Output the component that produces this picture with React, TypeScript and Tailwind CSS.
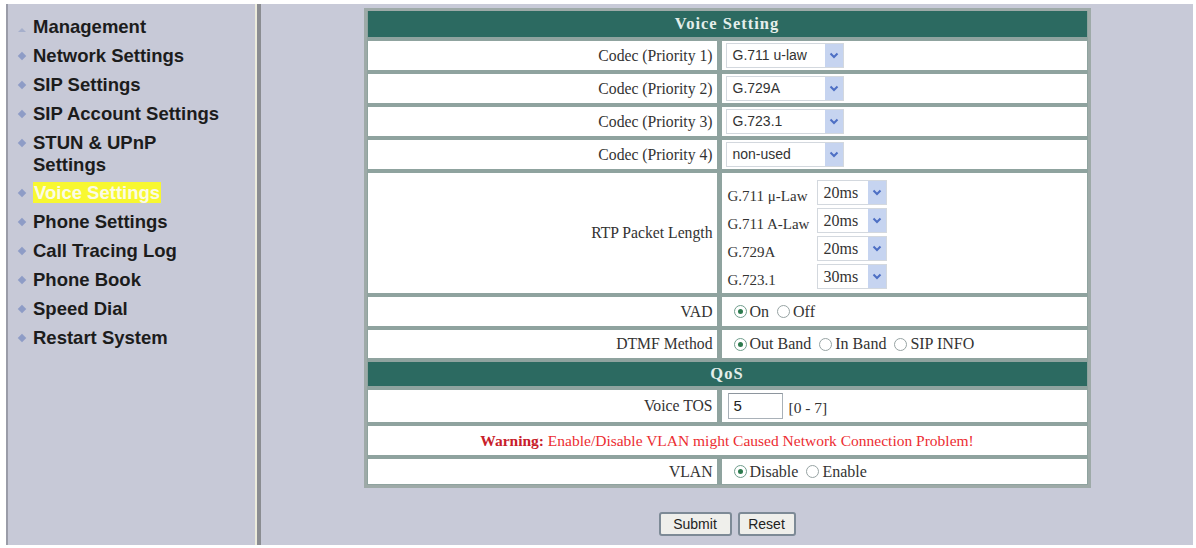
import React from "react";

const menu = [
  "Management",
  "Network Settings",
  "SIP Settings",
  "SIP Account Settings",
  "STUN & UPnP Settings",
  "Voice Settings",
  "Phone Settings",
  "Call Tracing Log",
  "Phone Book",
  "Speed Dial",
  "Restart System",
];

const serif = "font-['Liberation_Serif',serif]";
const sans = "font-['Liberation_Sans',Arial,sans-serif]";

const Chevron = () => (
  <svg width="10" height="7" viewBox="0 0 10 7">
    <path d="M1.5 1.5 L5 5 L8.5 1.5" stroke="#4d6fc4" strokeWidth="2" fill="none" />
  </svg>
);

const FakeSelect = ({ value, width, serifText }: { value: string; width: string; serifText?: boolean }) => (
  <div className={`${width} h-[25px] flex items-stretch bg-white border border-[#d3d8de]`}>
    <span
      className={`flex-1 flex items-center pl-[6px] text-[#333] ${
        serifText ? `${serif} text-[16px]` : `${sans} text-[14px]`
      }`}
    >
      {value}
    </span>
    <span className="w-[18px] bg-[#c6d4f0] flex items-center justify-center">
      <Chevron />
    </span>
  </div>
);

const Radio = ({ checked, label }: { checked?: boolean; label: string }) => (
  <span className="flex items-center mr-[8px]">
    <span
      className={`w-[13px] h-[13px] rounded-full border bg-white flex items-center justify-center mr-[3px] ${
        checked ? "border-[#6f9d8c]" : "border-[#97a3a3]"
      }`}
    >
      {checked && <span className="w-[5px] h-[5px] rounded-full bg-[#2d7a4d]" />}
    </span>
    <span className={`${serif} text-[16px] text-[#333]`}>{label}</span>
  </span>
);

const Row = ({ label, h, children }: { label: string; h: string; children: React.ReactNode }) => (
  <div className={`flex gap-[5px] ${h}`}>
    <div className={`w-[349px] bg-white flex items-center justify-end pr-[4px] ${serif} text-[15.7px] text-[#333]`}>
      {label}
    </div>
    <div className="flex-1 bg-white flex items-center pl-[4px]">{children}</div>
  </div>
);

const Header = ({ title, h }: { title: string; h: string }) => (
  <div
    className={`${h} bg-[#2c6a61] flex items-center justify-center ${serif} font-bold text-[16.5px] tracking-[1px] text-[#e4eeea]`}
  >
    {title}
  </div>
);

const rtp = [
  ["G.711 μ-Law", "20ms"],
  ["G.711 A-Law", "20ms"],
  ["G.729A", "20ms"],
  ["G.723.1", "30ms"],
];

export default function App() {
  return (
    <div className="w-[1196px] h-[548px] bg-white pt-[4px] pl-[6px] pr-[3px] pb-[3px] flex">
      {/* Sidebar */}
      <aside className="w-[249px] bg-[#c7c9d7] border-l-2 border-[#9a9ca8] pt-[12px] pl-[9px] flex flex-col gap-[6.9px]">
        {menu.map((item, i) => (
          <div key={item} className="flex items-start">
            <span className="w-[9px] h-[22px] flex items-center justify-center mr-[7px]">
              {i === 0 ? (
                <span className="w-0 h-0 border-l-[4px] border-r-[4px] border-b-[4px] border-l-transparent border-r-transparent border-b-[#a6afcb] mt-[6px]" />
              ) : (
                <span className="w-[6px] h-[6px] rotate-45 bg-[#8e9cc6]" />
              )}
            </span>
            <span className={`w-[194px] ${sans} font-bold text-[18.5px] leading-[22px] text-[#1c1c1c]`}>
              {i === 5 ? (
                <span className="bg-[#f8f830] text-[#fbfbe6] px-[1px]">{item}</span>
              ) : (
                item
              )}
            </span>
          </div>
        ))}
      </aside>

      {/* Separator */}
      <div className="w-[2px] bg-[#ecebdc]" />
      <div className="w-[4px] bg-[#8b8d92]" />

      {/* Content */}
      <main className="flex-1 bg-[#c8cad8] flex flex-col items-center pt-[4px]">
        <div className="w-[727px] border-[3px] border-[#9eaaa8] bg-[#8fa39f] px-[1px] pb-[1px] flex flex-col gap-[4px]">
          <Header title="Voice Setting" h="h-[26px]" />
          <Row label="Codec (Priority 1)" h="h-[29px]">
            <FakeSelect value="G.711 u-law" width="w-[118px]" />
          </Row>
          <Row label="Codec (Priority 2)" h="h-[29px]">
            <FakeSelect value="G.729A" width="w-[118px]" />
          </Row>
          <Row label="Codec (Priority 3)" h="h-[29px]">
            <FakeSelect value="G.723.1" width="w-[118px]" />
          </Row>
          <Row label="Codec (Priority 4)" h="h-[29px]">
            <FakeSelect value="non-used" width="w-[118px]" />
          </Row>
          <Row label="RTP Packet Length" h="h-[120px]">
            <div className="flex flex-col gap-[3px] self-start pt-[7px] pl-[2px]">
              {rtp.map(([name, val]) => (
                <div key={name} className="flex items-end h-[25px]">
                  <span className={`w-[89px] ${serif} text-[15px] leading-[20px] text-[#333] translate-y-[1px]`}>
                    {name}
                  </span>
                  <FakeSelect value={val} width="w-[70px]" serifText />
                </div>
              ))}
            </div>
          </Row>
          <Row label="VAD" h="h-[29px]">
            <div className="flex pl-[8px]">
              <Radio checked label="On" />
              <Radio label="Off" />
            </div>
          </Row>
          <Row label="DTMF Method" h="h-[28px]">
            <div className="flex pl-[8px]">
              <Radio checked label="Out Band" />
              <Radio label="In Band" />
              <Radio label="SIP INFO" />
            </div>
          </Row>
          <Header title="QoS" h="h-[24px]" />
          <Row label="Voice TOS" h="h-[32px]">
            <div className="flex items-center pl-[2px]">
              <div className={`w-[55px] h-[26px] border border-[#a9b1b8] border-t-[#8e969e] bg-white flex items-center pl-[5px] ${sans} text-[15px] text-[#222]`}>
                5
              </div>
              <span className={`ml-[6px] ${serif} text-[15.5px] text-[#333] mt-[3px]`}>[0 - 7]</span>
            </div>
          </Row>
          <div className={`h-[29px] bg-white flex items-center justify-center ${serif} text-[15.5px] text-[#ec2d32]`}>
            <span className="font-bold text-[#c8202a]">Warning:</span>&nbsp;Enable/Disable VLAN might Caused Network Connection Problem!
          </div>
          <Row label="VLAN" h="h-[25px]">
            <div className="flex pl-[8px]">
              <Radio checked label="Disable" />
              <Radio label="Enable" />
            </div>
          </Row>
        </div>

        <div className="flex gap-[6px] mt-[24px]">
          <button className={`w-[73px] h-[24px] border-2 border-[#7d8a96] rounded-[3px] bg-[#efefeb] ${sans} text-[14px] text-[#222]`}>
            Submit
          </button>
          <button className={`w-[58px] h-[24px] border-2 border-[#7d8a96] rounded-[3px] bg-[#efefeb] ${sans} text-[14px] text-[#222]`}>
            Reset
          </button>
        </div>
      </main>
    </div>
  );
}
